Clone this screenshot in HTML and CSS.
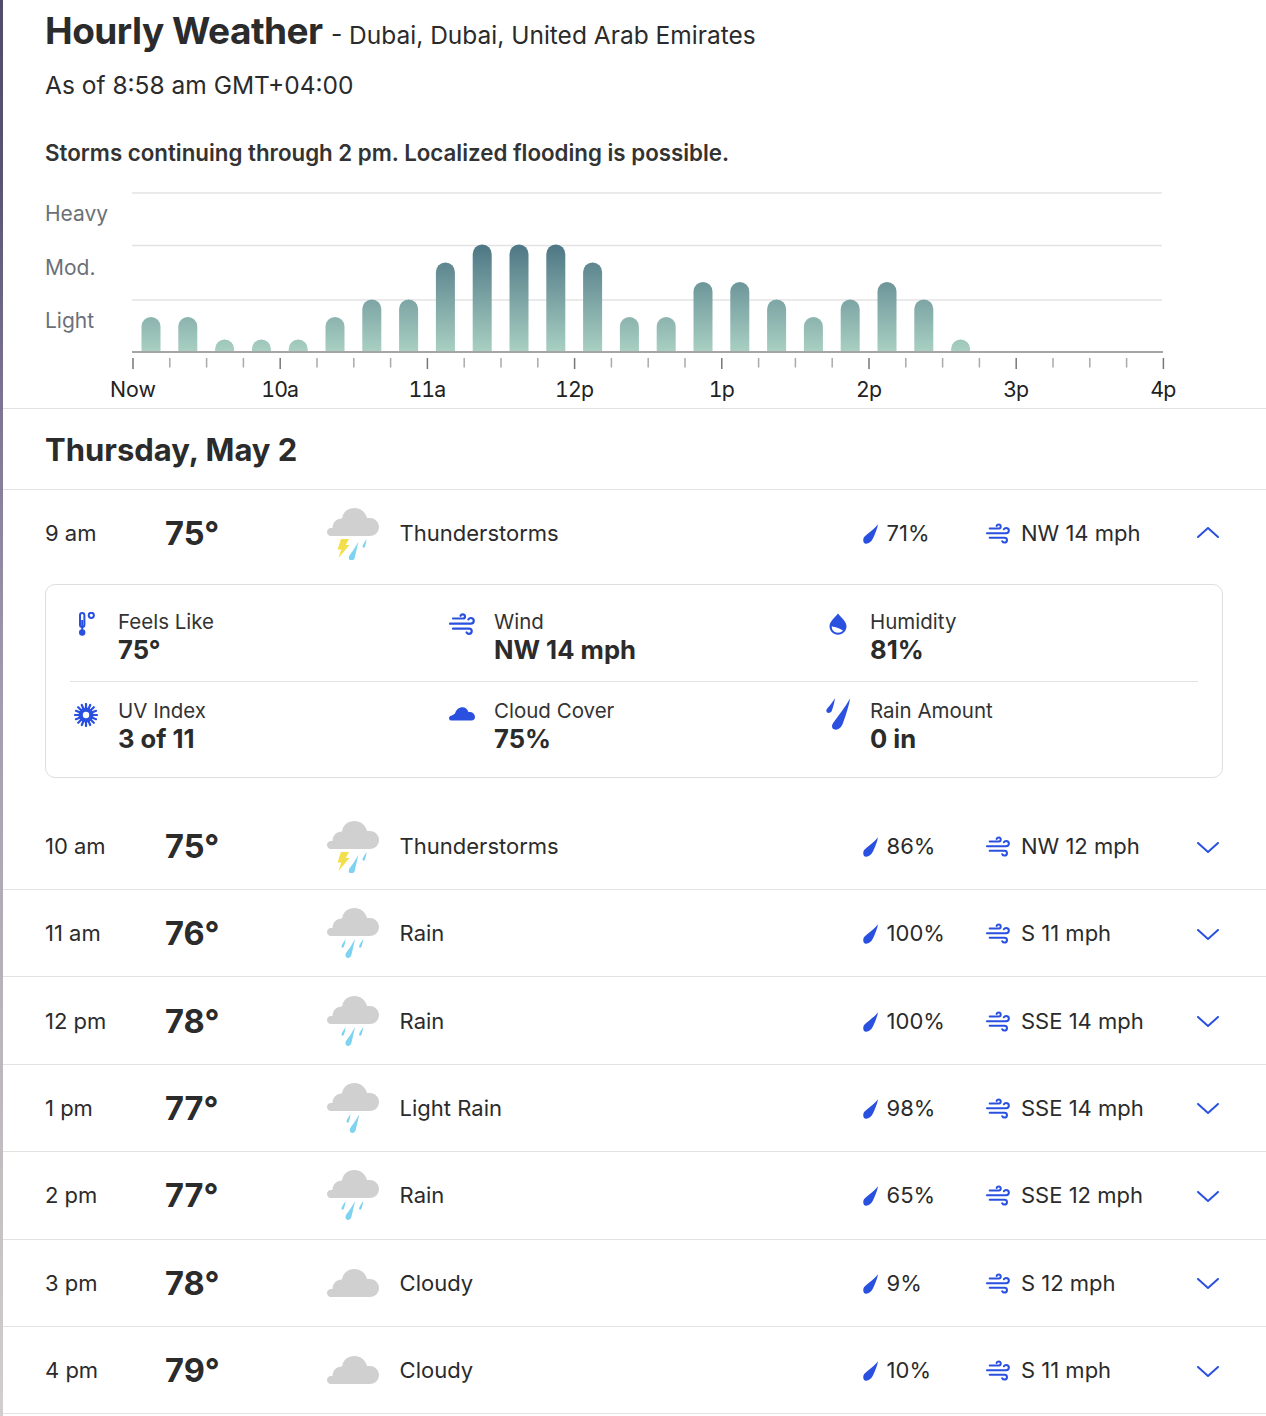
FILE: index.html
```html
<!DOCTYPE html>
<html lang="en">
<head>
<meta charset="utf-8">
<title>Hourly Weather</title>
<link rel="stylesheet" href="styles.css">
</head>
<body>
<svg class="defs" width="0" height="0" aria-hidden="true">
  <defs>
    <path id="cloud" d="M5 30C2.5 30 1 28 1 26S2.5 22 5 22H6.5C6.5 16.5 10.5 12.5 16 12.5 17 6 22 2 28.5 2 34.5 2 39.5 6 41 12H44C49 12 53 16 53 21S49 30 44 30Z"/>
    <path id="big" d="M29 33C28 38 26.5 44 25.5 48.5 25 51.5 22 52.8 20.3 51.2 18.8 49.6 19.5 47.5 21 45.5 24 41.5 27 37 29 33Z"/>
    <path id="small" d="M19.7 33C19.2 36 18.6 38.5 18 40.5 17.5 42.2 15.3 42 15.5 40.3 15.7 38.8 17.5 36 19.7 33Z"/>
    <symbol id="i-thunder" viewBox="0 0 54 54">
      <use href="#cloud" class="c-cloud"/>
      <path class="c-bolt" d="M15 33H23L19.7 39H23.5L12.5 52 15.2 43.5H11.5Z"/>
      <use href="#big" class="c-drop" transform="translate(3.3 2.7)"/>
      <use href="#small" class="c-drop" transform="translate(21 0)"/>
    </symbol>
    <symbol id="i-rain" viewBox="0 0 54 54">
      <use href="#cloud" class="c-cloud"/>
      <use href="#small" class="c-drop"/>
      <use href="#big" class="c-drop"/>
      <use href="#small" class="c-drop" transform="translate(17.6 0)"/>
    </symbol>
    <symbol id="i-light" viewBox="0 0 54 54">
      <use href="#cloud" class="c-cloud"/>
      <use href="#small" class="c-drop" transform="translate(5 0)"/>
      <use href="#big" class="c-drop" transform="translate(4.3 0)"/>
    </symbol>
    <symbol id="i-cloudy" viewBox="0 0 54 54">
      <use href="#cloud" class="c-cloud" transform="translate(0 11)"/>
    </symbol>
    <symbol id="i-precip" viewBox="0 0 16 20">
      <path d="M15 .2C14.2 5 12 10 9.8 14.8 8.2 18.3 4.8 20.4 2.2 19.6-.1 18.7-.3 15.3 1.1 13.1 5 9 11.5 5 15 .2Z"/>
    </symbol>
    <symbol id="i-wind" viewBox="0 0 26 22">
      <g fill="none" stroke="currentColor" stroke-width="2.2" stroke-linecap="round">
        <path d="M4 5.5H14C16.5 5.5 16.8 1.3 13.8 1.3 12.6 1.3 11.8 2 11.5 2.8"/>
        <path d="M1 10.7H21.7C25.8 10.7 25.8 5 21.7 5 20.6 5 19.8 5.6 19.4 6.4"/>
        <path d="M4 15.7H20C23.6 15.7 23.6 20.8 20 20.8 18.8 20.8 18 20.2 17.6 19.4"/>
      </g>
    </symbol>
    <symbol id="i-therm" viewBox="0 0 18 24">
      <rect x="2" y="1" width="4.4" height="14" rx="2.2" fill="none" stroke="currentColor" stroke-width="2"/>
      <rect x="3.2" y="8" width="2" height="10" fill="currentColor"/>
      <circle cx="4.2" cy="20.5" r="3.2" fill="currentColor"/>
      <circle cx="13.3" cy="3.3" r="2.6" fill="none" stroke="currentColor" stroke-width="2"/>
    </symbol>
    <symbol id="i-sun" viewBox="0 0 24 24">
      <g stroke="currentColor" stroke-width="2.2" stroke-linecap="round">
        <path d="M12 1V23M1 12H23M4.2 4.2L19.8 19.8M19.8 4.2L4.2 19.8M7.8 2L16.2 22M16.2 2L7.8 22M2 7.8L22 16.2M2 16.2L22 7.8"/>
      </g>
      <circle cx="12" cy="12" r="7.6" fill="currentColor"/>
      <circle cx="12" cy="12" r="3.2" fill="#fff"/>
    </symbol>
    <symbol id="i-cover" viewBox="0 0 26 14">
      <path d="M3 13.5C1.3 13.5 0 12.6 0 11.2 0 9.6 1.3 8.7 3 8.5 4 7.9 5 7 6 6.6 7.3 2.5 10 .3 13.3 .3 16.4 .3 18.4 2.2 19.5 5 20 5 20.7 4.9 21.4 5 24 5.4 26 7.6 26 10 26 12 24.6 13.5 22.6 13.5Z"/>
    </symbol>
    <symbol id="i-humid" viewBox="0 0 18 22">
      <path d="M9 .5C6 4.5 .5 8.5 .5 13.3 .5 18 4.3 21.7 9 21.7S17.5 18 17.5 13.3C17.5 8.5 12 4.5 9 .5Z" fill="currentColor"/>
      <path d="M2.8 13.2C4.5 13.8 7 14.2 9.5 15.2 11.4 15.9 13 16.8 14 17.8 12.7 19 10.9 19.7 9 19.7 5.4 19.7 2.4 16.8 2.8 13.2Z" fill="#fff"/>
    </symbol>
    <symbol id="i-amount" viewBox="0 0 25 32">
      <path d="M9 .3C8.5 4 7.2 9 5.8 12.8 5 15 2 15.6 .7 14 0 13 .3 11.8 1.2 10.6 3.8 7.6 6.6 4.2 9 .3Z"/>
      <path d="M24.2 .3C23 7.5 20 17 16.8 25.5 15 30.6 10.5 33 7.4 31 5.5 29.7 5.6 27.2 7.3 24.8 13 17 19.5 8.5 24.2 .3Z"/>
    </symbol>
    <symbol id="i-down" viewBox="0 0 22 11">
      <path d="M1 1L11 10 21 1" fill="none" stroke="currentColor" stroke-width="2" stroke-linecap="round" stroke-linejoin="round"/>
    </symbol>
    <symbol id="i-up" viewBox="0 0 22 11">
      <path d="M1 10L11 1 21 10" fill="none" stroke="currentColor" stroke-width="2" stroke-linecap="round" stroke-linejoin="round"/>
    </symbol>
  </defs>
</svg>

<main class="page">
  <header class="head">
    <h1 class="title">Hourly Weather <span class="place">- Dubai, Dubai, United Arab Emirates</span></h1>
    <p class="asof">As of 8:58 am GMT+04:00</p>
  </header>

  <section class="summary">
    <p class="alert">Storms continuing through 2 pm. Localized flooding is possible.</p>
    <div class="chart">
      <ul class="levels">
        <li>Heavy</li>
        <li>Mod.</li>
        <li>Light</li>
      </ul>
      <svg class="plot" width="1266" height="218" viewBox="0 0 1266 218">
        <defs>
          <linearGradient id="bar" gradientUnits="userSpaceOnUse" x1="0" y1="55" x2="0" y2="162">
            <stop offset="0" stop-color="#4e7785"/>
            <stop offset="1" stop-color="#a9d0c2"/>
          </linearGradient>
        </defs>
        <g class="grid">
          <line x1="132" x2="1162" y1="3" y2="3"/>
          <line x1="132" x2="1162" y1="55.5" y2="55.5"/>
          <line x1="132" x2="1162" y1="110" y2="110"/>
        </g>
        <g id="bars" fill="url(#bar)">
          <path d="M141.500 162v-25.500a9.500 9.500 0 0 1 19 0v25.500z"/>
          <path d="M178.300 162v-25.500a9.500 9.500 0 0 1 19 0v25.500z"/>
          <path d="M215.100 162v-3a9.500 9.500 0 0 1 19 0v3z"/>
          <path d="M251.900 162v-3a9.500 9.500 0 0 1 19 0v3z"/>
          <path d="M288.700 162v-3a9.500 9.500 0 0 1 19 0v3z"/>
          <path d="M325.500 162v-25.500a9.500 9.500 0 0 1 19 0v25.500z"/>
          <path d="M362.300 162v-43a9.500 9.500 0 0 1 19 0v43z"/>
          <path d="M399.100 162v-43a9.500 9.500 0 0 1 19 0v43z"/>
          <path d="M435.900 162v-80a9.500 9.500 0 0 1 19 0v80z"/>
          <path d="M472.700 162v-98a9.500 9.500 0 0 1 19 0v98z"/>
          <path d="M509.500 162v-98a9.500 9.500 0 0 1 19 0v98z"/>
          <path d="M546.300 162v-98a9.500 9.500 0 0 1 19 0v98z"/>
          <path d="M583.100 162v-80a9.500 9.500 0 0 1 19 0v80z"/>
          <path d="M619.900 162v-25.500a9.500 9.500 0 0 1 19 0v25.500z"/>
          <path d="M656.700 162v-25.500a9.500 9.500 0 0 1 19 0v25.500z"/>
          <path d="M693.500 162v-60.500a9.500 9.500 0 0 1 19 0v60.500z"/>
          <path d="M730.300 162v-60.500a9.500 9.500 0 0 1 19 0v60.500z"/>
          <path d="M767.100 162v-43a9.500 9.500 0 0 1 19 0v43z"/>
          <path d="M803.900 162v-25.500a9.500 9.500 0 0 1 19 0v25.500z"/>
          <path d="M840.700 162v-43a9.500 9.500 0 0 1 19 0v43z"/>
          <path d="M877.500 162v-60.500a9.500 9.500 0 0 1 19 0v60.500z"/>
          <path d="M914.300 162v-43a9.500 9.500 0 0 1 19 0v43z"/>
          <path d="M951.100 162v-3a9.500 9.500 0 0 1 19 0v3z"/>
        </g>
        <line class="axis" x1="132" x2="1163" y1="162" y2="162"/>
        <path class="tick-major" d="M133 168v11M280.200 168v11M427.400 168v11M574.600 168v11M721.800 168v11M869 168v11M1016.200 168v11M1163.400 168v11"/>
        <path class="tick-minor" d="M169.800 168v9.500M206.600 168v9.500M243.400 168v9.500M317 168v9.500M353.800 168v9.500M390.600 168v9.500M464.200 168v9.500M501 168v9.500M537.800 168v9.500M611.400 168v9.500M648.200 168v9.500M685 168v9.500M758.600 168v9.500M795.400 168v9.500M832.200 168v9.500M905.800 168v9.500M942.600 168v9.500M979.400 168v9.500M1053 168v9.500M1089.800 168v9.500M1126.600 168v9.500"/>
        <g class="hours">
          <text class="now" x="133" y="207">Now</text>
          <text x="279.700" y="207">10a</text>
          <text x="426.900" y="207">11a</text>
          <text x="574.100" y="207">12p</text>
          <text x="721.300" y="207">1p</text>
          <text x="868.500" y="207">2p</text>
          <text x="1015.700" y="207">3p</text>
          <text x="1162.900" y="207">4p</text>
        </g>
      </svg>
    </div>
  </section>

  <h2 class="day">Thursday, May 2</h2>

  <section class="hours-list">
    <div class="row row-open">
      <span class="time">9 am</span><span class="temp">75°</span>
      <svg class="wx"><use href="#i-thunder"/></svg><span class="cond">Thunderstorms</span>
      <span class="pct"><svg class="ic-precip"><use href="#i-precip"/></svg>71%</span>
      <span class="wnd"><svg class="ic-wind"><use href="#i-wind"/></svg>NW 14 mph</span>
      <svg class="chev"><use href="#i-up"/></svg>
    </div>
    <div class="panel">
      <div class="stat"><svg class="si si-therm"><use href="#i-therm"/></svg><div><p class="lab">Feels Like</p><p class="val">75°</p></div></div>
      <div class="stat"><svg class="si si-wind"><use href="#i-wind"/></svg><div><p class="lab">Wind</p><p class="val">NW 14 mph</p></div></div>
      <div class="stat"><svg class="si si-humid"><use href="#i-humid"/></svg><div><p class="lab">Humidity</p><p class="val">81%</p></div></div>
      <div class="stat stat-sep"><svg class="si si-sun"><use href="#i-sun"/></svg><div><p class="lab">UV Index</p><p class="val">3 of 11</p></div></div>
      <div class="stat stat-sep"><svg class="si si-cover"><use href="#i-cover"/></svg><div><p class="lab">Cloud Cover</p><p class="val">75%</p></div></div>
      <div class="stat stat-sep"><svg class="si si-amount"><use href="#i-amount"/></svg><div><p class="lab">Rain Amount</p><p class="val">0 in</p></div></div>
    </div>

    <div class="row row-next">
      <span class="time">10 am</span><span class="temp">75°</span>
      <svg class="wx"><use href="#i-thunder"/></svg><span class="cond">Thunderstorms</span>
      <span class="pct"><svg class="ic-precip"><use href="#i-precip"/></svg>86%</span>
      <span class="wnd"><svg class="ic-wind"><use href="#i-wind"/></svg>NW 12 mph</span>
      <svg class="chev"><use href="#i-down"/></svg>
    </div>
    <div class="row">
      <span class="time">11 am</span><span class="temp">76°</span>
      <svg class="wx"><use href="#i-rain"/></svg><span class="cond">Rain</span>
      <span class="pct"><svg class="ic-precip"><use href="#i-precip"/></svg>100%</span>
      <span class="wnd"><svg class="ic-wind"><use href="#i-wind"/></svg>S 11 mph</span>
      <svg class="chev"><use href="#i-down"/></svg>
    </div>
    <div class="row">
      <span class="time">12 pm</span><span class="temp">78°</span>
      <svg class="wx"><use href="#i-rain"/></svg><span class="cond">Rain</span>
      <span class="pct"><svg class="ic-precip"><use href="#i-precip"/></svg>100%</span>
      <span class="wnd"><svg class="ic-wind"><use href="#i-wind"/></svg>SSE 14 mph</span>
      <svg class="chev"><use href="#i-down"/></svg>
    </div>
    <div class="row">
      <span class="time">1 pm</span><span class="temp">77°</span>
      <svg class="wx"><use href="#i-light"/></svg><span class="cond">Light Rain</span>
      <span class="pct"><svg class="ic-precip"><use href="#i-precip"/></svg>98%</span>
      <span class="wnd"><svg class="ic-wind"><use href="#i-wind"/></svg>SSE 14 mph</span>
      <svg class="chev"><use href="#i-down"/></svg>
    </div>
    <div class="row">
      <span class="time">2 pm</span><span class="temp">77°</span>
      <svg class="wx"><use href="#i-rain"/></svg><span class="cond">Rain</span>
      <span class="pct"><svg class="ic-precip"><use href="#i-precip"/></svg>65%</span>
      <span class="wnd"><svg class="ic-wind"><use href="#i-wind"/></svg>SSE 12 mph</span>
      <svg class="chev"><use href="#i-down"/></svg>
    </div>
    <div class="row">
      <span class="time">3 pm</span><span class="temp">78°</span>
      <svg class="wx"><use href="#i-cloudy"/></svg><span class="cond">Cloudy</span>
      <span class="pct"><svg class="ic-precip"><use href="#i-precip"/></svg>9%</span>
      <span class="wnd"><svg class="ic-wind"><use href="#i-wind"/></svg>S 12 mph</span>
      <svg class="chev"><use href="#i-down"/></svg>
    </div>
    <div class="row">
      <span class="time">4 pm</span><span class="temp">79°</span>
      <svg class="wx"><use href="#i-cloudy"/></svg><span class="cond">Cloudy</span>
      <span class="pct"><svg class="ic-precip"><use href="#i-precip"/></svg>10%</span>
      <span class="wnd"><svg class="ic-wind"><use href="#i-wind"/></svg>S 11 mph</span>
      <svg class="chev"><use href="#i-down"/></svg>
    </div>
  </section>
</main>
</body>
</html>
```
FILE: styles.css
```css
* { box-sizing: border-box; }
html, body { margin: 0; padding: 0; }
body {
  height: 1416px;
  overflow: hidden;
  background: #fff;
  color: #2b2b2b;
  font-family: Inter, "Liberation Sans", sans-serif;
}
p, h1, h2, ul { margin: 0; padding: 0; }
.defs { display: block; height: 0; }
.page {
  height: 1416px;
  padding-left: 3px;
  background: linear-gradient(#524c6b 0, #5a5472 180px, #7c7490 400px, #a39cb0 700px, #b8b2ba 1000px, #d2cecd 1416px) left top / 3px 100% no-repeat;
  overflow: hidden;
}
.head { padding: 9px 0 0 42px; height: 96px; }
.title {
  font-size: 37px;
  line-height: 44px;
  font-weight: 700;
  letter-spacing: -0.5px;
}
.place {
  font-size: 24.5px;
  font-weight: 400;
  letter-spacing: 0;
}
.asof {
  margin-top: 13px;
  font-size: 24.5px;
  line-height: 30px;
}
.summary { border-bottom: 1px solid #e2e2e2; height: 313px; }
.alert {
  padding: 43px 0 0 42px;
  font-size: 22.3px;
  line-height: 28px;
  font-weight: 600;
  color: #333;
}
.chart { position: relative; margin: 23px 0 0 -3px; }
.levels {
  position: absolute;
  left: 45px;
  top: 5px;
  list-style: none;
  color: #6b7078;
  font-size: 21px;
}
.levels li { height: 53.5px; line-height: 38px; }
.plot { display: block; }
.grid line { stroke: #e3e3e3; stroke-width: 1.5; }
.axis { stroke: #a5a5a5; stroke-width: 2; }
.tick-major { stroke: #777; stroke-width: 1.5; fill: none; }
.tick-minor { stroke: #aaa; stroke-width: 1.5; fill: none; }
.hours text { font-size: 21.3px; fill: #222; text-anchor: middle; font-variant-numeric: tabular-nums; letter-spacing: -0.9px; }
.hours .now { letter-spacing: 0; }
.day {
  padding: 0 0 0 42px;
  height: 81px;
  line-height: 82px;
  font-size: 31px;
  font-weight: 700;
  border-bottom: 1px solid #e2e2e2;
}
.row {
  display: flex;
  align-items: center;
  height: 87.38px;
  padding-left: 42px;
  border-bottom: 1px solid #e2e2e2;
  font-size: 22px;
}
.row-open { height: 87px; border-bottom: 0; padding-bottom: 2px; }
.row-next { height: 87px; }
.time { width: 120px; }
.temp { width: 161px; font-size: 32.6px; font-weight: 700; }
.wx { width: 54px; height: 54px; flex: none; }
.cond { width: 463px; margin-left: 19.6px; }
.pct { width: 123.4px; display: flex; align-items: center; }
.wnd { width: 211px; display: flex; align-items: center; }
.ic-precip { width: 16px; height: 20px; color: #2a50e0; fill: #2a50e0; margin-right: 8px; flex: none; margin-top: 2px; }
.ic-wind { width: 24px; height: 21px; color: #2a50e0; margin-right: 11px; flex: none; margin-top: 1px; }
.chev { width: 22px; height: 11px; color: #2a50e0; flex: none; margin-top: 2px; }
.row-open .chev { margin-top: 0; }
.c-cloud { fill: #d0d0d0; }
.c-drop { fill: #7dd3f0; }
.c-bolt { fill: #f3de4b; }
.panel {
  display: grid;
  grid-template-columns: repeat(3, 376px);
  margin: 7px 0 25px 42px;
  width: 1178px;
  height: 194px;
  padding: 0 24px;
  border: 1px solid #dedede;
  border-radius: 10px;
}
.stat { position: relative; padding-left: 48px; padding-top: 23px; height: 96px; }
.stat-sep { border-top: 1px solid #e2e2e2; padding-top: 15px; }
.lab { font-size: 20.5px; line-height: 28px; color: #333; }
.val { font-size: 25.6px; line-height: 27px; font-weight: 700; }
.si { position: absolute; color: #2a50e0; fill: #2a50e0; }
.si-therm { left: 8px; top: 27px; width: 18px; height: 24px; }
.si-wind { left: 3px; top: 28px; width: 26px; height: 22px; }
.si-humid { left: 7px; top: 28px; width: 18px; height: 22px; }
.si-sun { left: 4px; top: 21px; width: 24px; height: 24px; }
.si-cover { left: 3px; top: 25px; width: 26px; height: 14px; }
.si-amount { left: 4px; top: 16px; width: 25px; height: 32px; }
```
